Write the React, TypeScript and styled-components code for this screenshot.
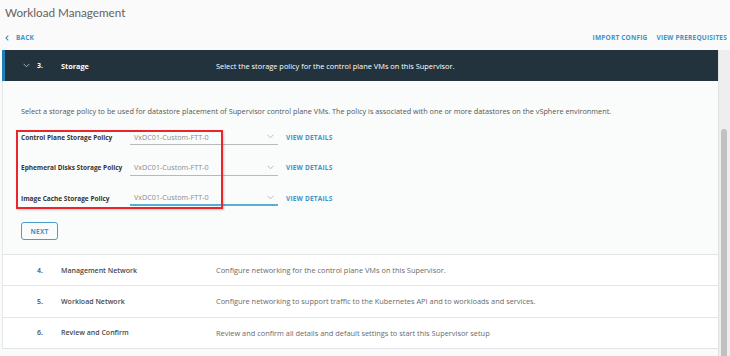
import React from "react";
import styled, { createGlobalStyle } from "styled-components";

const GlobalStyle = createGlobalStyle`
  html, body {
    margin: 0;
    padding: 0;
    background: #fafafa;
    font-family: "Open Sans", "Liberation Sans", sans-serif;
    overflow: hidden;
  }
`;

interface Step {
  num: string;
  title: string;
  text: string;
}

const steps: Step[] = [
  {
    num: "4.",
    title: "Management Network",
    text: "Configure networking for the control plane VMs on this Supervisor.",
  },
  {
    num: "5.",
    title: "Workload Network",
    text: "Configure networking to support traffic to the Kubernetes API and to workloads and services.",
  },
  {
    num: "6.",
    title: "Review and Confirm",
    text: "Review and confirm all details and default settings to start this Supervisor setup",
  },
];

const policies = [
  "Control Plane Storage Policy",
  "Ephemeral Disks Storage Policy",
  "Image Cache Storage Policy",
];

const Chevron = ({ color }: { color: string }) => (
  <svg width="7" height="5" viewBox="0 0 7 5">
    <path d="M0.6 0.8 L3.5 3.8 L6.4 0.8" fill="none" stroke={color} strokeWidth="0.9" />
  </svg>
);

const BackIcon = () => (
  <svg width="4" height="6" viewBox="0 0 4 6">
    <path d="M3.3 0.6 L0.9 3 L3.3 5.4" fill="none" stroke="#3f93c6" strokeWidth="1.1" />
  </svg>
);

const App = () => {
  return (
    <Page>
      <GlobalStyle />
      <Title>Workload Management</Title>
      <NavBar>
        <BackLink>
          <BackIcon />
          <LinkText>BACK</LinkText>
        </BackLink>
        <NavRight>
          <LinkText>IMPORT CONFIG</LinkText>
          <LinkText>VIEW PREREQUISITES</LinkText>
        </NavRight>
      </NavBar>
      <Body>
        <Wizard>
          <ActiveHeader>
            <NumCell>
              <Expander>
                <Chevron color="#aeb8bd" />
              </Expander>
              <span>3.</span>
            </NumCell>
            <StepTitle $dark>Storage</StepTitle>
            <StepText $dark>
              Select the storage policy for the control plane VMs on this Supervisor.
            </StepText>
          </ActiveHeader>
          <Panel>
            <Intro>
              Select a storage policy to be used for datastore placement of Supervisor control
              plane VMs. The policy is associated with one or more datastores on the vSphere
              environment.
            </Intro>
            <Form>
              <Highlight />
              {policies.map((label, i) => (
                <FormRow key={label}>
                  <Label>{label}</Label>
                  <Select $focused={i === policies.length - 1}>
                    <span>VxDC01-Custom-FTT-0</span>
                    <Chevron color="#b5b5b5" />
                  </Select>
                  <LinkText>VIEW DETAILS</LinkText>
                </FormRow>
              ))}
            </Form>
            <NextButton>NEXT</NextButton>
          </Panel>
          {steps.map((s) => (
            <StepRow key={s.num}>
              <NumCell>
                <Expander />
                <span>{s.num}</span>
              </NumCell>
              <StepTitle>{s.title}</StepTitle>
              <StepText>{s.text}</StepText>
            </StepRow>
          ))}
        </Wizard>
        <Scrollbar>
          <Thumb />
        </Scrollbar>
      </Body>
    </Page>
  );
};

export default App;

const Page = styled.div`
  width: 730px;
  height: 356px;
  display: flex;
  flex-direction: column;
`;

const Title = styled.div`
  font-family: Lato, "Open Sans", sans-serif;
  font-size: 11.7px;
  color: #636363;
  padding: 3px 0 0 5px;
  height: 25px;
  line-height: 18px;
  box-sizing: border-box;
`;

const NavBar = styled.div`
  display: flex;
  justify-content: space-between;
  align-items: center;
  height: 25px;
  padding: 0 3px 0 5px;
  box-sizing: border-box;
`;

const BackLink = styled.div`
  display: flex;
  align-items: center;
  gap: 7px;
`;

const NavRight = styled.div`
  display: flex;
  gap: 9px;
`;

const LinkText = styled.span`
  font-size: 6.5px;
  font-weight: 700;
  letter-spacing: 0.2px;
  color: #3f93c6;
  white-space: nowrap;
`;

const Body = styled.div`
  flex: 1;
  display: flex;
  min-height: 0;
`;

const Wizard = styled.div`
  flex: 1;
  margin-left: 2px;
  display: flex;
  flex-direction: column;
`;

const ActiveHeader = styled.div`
  display: flex;
  align-items: center;
  height: 31px;
  background: #22333d;
  box-shadow: inset 3px 0 0 #1f7fb6;
  color: #ffffff;
  flex-shrink: 0;
`;

const NumCell = styled.div`
  width: 59px;
  padding-left: 21px;
  box-sizing: border-box;
  display: flex;
  align-items: center;
  gap: 7px;
  font-size: 7px;
  font-weight: 700;
`;

const Expander = styled.span`
  width: 7px;
  height: 5px;
  display: flex;
`;

const StepTitle = styled.div<{ $dark?: boolean }>`
  width: 155px;
  font-size: ${(p) => (p.$dark ? "7.3px" : "7px")};
  font-weight: ${(p) => (p.$dark ? 700 : 600)};
  color: ${(p) => (p.$dark ? "#ffffff" : "#4a4a4a")};
`;

const StepText = styled.div<{ $dark?: boolean }>`
  font-size: 7.4px;
  color: ${(p) => (p.$dark ? "#ffffff" : "#6a6a6a")};
  white-space: nowrap;
`;

const Panel = styled.div`
  background: #fafcfc;
  box-shadow: inset 1px 0 0 #e3e8ea;
  padding: 25px 0 14px 19px;
  flex-shrink: 0;
`;

const Intro = styled.div`
  font-size: 7.3px;
  line-height: 10px;
  color: #555;
  white-space: nowrap;
`;

const Form = styled.div`
  position: relative;
  margin-top: 13px;
  display: flex;
  flex-direction: column;
  gap: 14.5px;
`;

const Highlight = styled.div`
  position: absolute;
  left: -5px;
  top: 1px;
  width: 207px;
  height: 79px;
  border: 2px solid #e8262c;
  box-sizing: border-box;
  box-shadow: 1px 1px 2px rgba(0, 0, 0, 0.2);
  pointer-events: none;
`;

const FormRow = styled.div`
  display: flex;
  align-items: center;
  height: 16px;
`;

const Label = styled.div`
  width: 109px;
  font-size: 6.5px;
  font-weight: 700;
  color: #333;
  white-space: nowrap;
`;

const Select = styled.div<{ $focused?: boolean }>`
  width: 148px;
  height: 16px;
  box-sizing: border-box;
  padding: 0 4px;
  display: flex;
  align-items: center;
  justify-content: space-between;
  font-size: 7.2px;
  color: #8c8c8c;
  border-bottom: ${(p) => (p.$focused ? "2px solid #5aaed6" : "1px solid #b9b9b9")};
  margin-right: 8px;
`;

const NextButton = styled.button`
  margin-top: 16px;
  width: 37px;
  height: 18px;
  border: 1px solid #4a9ccc;
  border-radius: 3px;
  background: transparent;
  color: #3f93c6;
  font-family: inherit;
  font-size: 6.5px;
  font-weight: 700;
  letter-spacing: 0.3px;
  padding: 0;
`;

const StepRow = styled.div`
  display: flex;
  align-items: center;
  height: 31.3px;
  box-sizing: border-box;
  flex-shrink: 0;
  background: #ffffff;
  border-top: 1px solid #e1e5e7;
  box-shadow: inset 1px 0 0 #e3e8ea;
  &:last-child {
    height: 32px;
    border-bottom: 1px solid #e1e5e7;
  }
  ${NumCell} {
    color: #4a4a4a;
    font-weight: 600;
  }
`;

const Scrollbar = styled.div`
  width: 11px;
  background: #eeeeee;
  border-left: 1px solid #e2e2e2;
  position: relative;
`;

const Thumb = styled.div`
  position: absolute;
  left: 2px;
  top: 79px;
  width: 6px;
  bottom: -10px;
  background: #c1c1c1;
  border-radius: 3px;
`;
